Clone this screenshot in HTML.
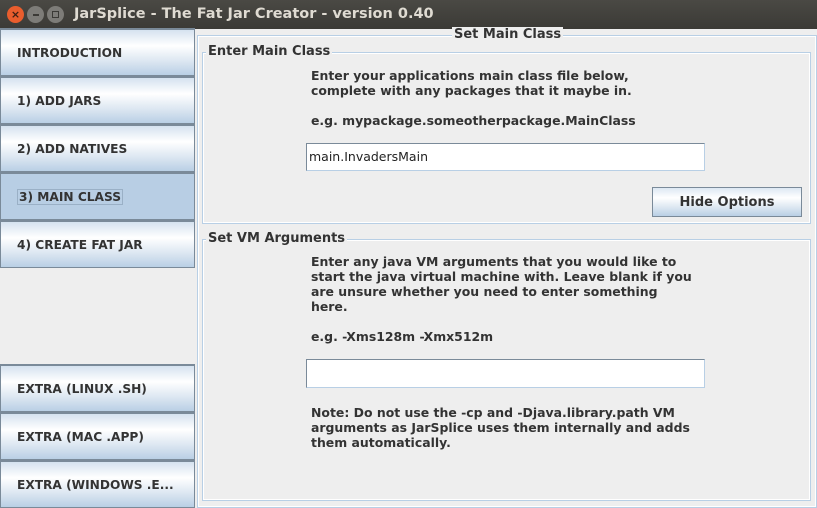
<!DOCTYPE html>
<html><head><style>
*{margin:0;padding:0;box-sizing:border-box}
body{width:817px;height:508px;background:#eeeeee;position:relative;overflow:hidden;font-family:"DejaVu Sans","Liberation Sans",sans-serif;font-weight:bold;font-size:12.5px;color:#333}
.a{position:absolute}
.tb{left:0;top:0;width:817px;height:29px;background:linear-gradient(#4a4944,#3b3a36);color:#dfdbd2;font-size:14.5px;line-height:29px}
.c{width:17px;height:17px;border-radius:50%;top:6px}
.btn{left:0;width:195px;height:48px;border:1px solid #7a8a99;border-top:2px solid #7a8a99;background:linear-gradient(#d5e2ef 0%,#fff 35%,#dbe6f1 70%,#b9cfe5 100%);padding-left:16px;line-height:46px;font-size:12.2px;color:#333}
.sel{background:#b8cee4}
.grp{border:1px solid #b8cfe5;box-shadow:inset 0 0 0 1px #fff}
.lg{background:#eeeeee;padding:0 2px;font-size:13px}
.t{left:311px;line-height:15px;white-space:pre;font-size:12.45px}
.tf{background:#fff;border:1px solid #7a8a99;border-right-color:#b8cfe5;border-bottom-color:#b8cfe5;font-weight:normal;font-size:12.5px;line-height:26px;padding-left:2px;color:#222}
</style></head><body>
<div class="a tb"><span class="a" style="left:74px">JarSplice - The Fat Jar Creator - version 0.40</span></div>
<div class="a c" style="left:7px;background:#e95d2d;color:#3b1f14;font-size:11px;line-height:17px;text-align:center">×</div>
<div class="a c" style="left:27px;background:#7d7c78"></div>
<div class="a c" style="left:47px;background:#7d7c78"></div>
<div class="a" style="left:33px;top:14px;width:6px;height:2px;background:#3b3a36"></div>
<div class="a" style="left:52px;top:11px;width:7px;height:7px;border:1px solid #3b3a36"></div>

<div class="a btn" style="top:28px">INTRODUCTION</div>
<div class="a btn" style="top:76px">1) ADD JARS</div>
<div class="a btn" style="top:124px">2) ADD NATIVES</div>
<div class="a btn sel" style="top:172px"><span style="border:1px solid #9ab0c6;padding:0 1px">3) MAIN CLASS</span></div>
<div class="a btn" style="top:220px">4) CREATE FAT JAR</div>
<div class="a btn" style="top:364px">EXTRA (LINUX .SH)</div>
<div class="a btn" style="top:412px">EXTRA (MAC .APP)</div>
<div class="a btn" style="top:460px">EXTRA (WINDOWS .E...</div>

<div class="a grp" style="left:197px;top:35px;width:620px;height:473px"></div>
<div class="a lg" style="left:452px;top:27px;line-height:16px">Set Main Class</div>

<div class="a grp" style="left:202px;top:52px;width:609px;height:172px"></div>
<div class="a lg" style="left:206px;top:44px;line-height:16px">Enter Main Class</div>
<div class="a t" style="top:68px">Enter your applications main class file below,
complete with any packages that it maybe in.

e.g. mypackage.someotherpackage.MainClass</div>
<div class="a tf" style="left:306px;top:143px;width:399px;height:28px">main.InvadersMain</div>
<div class="a" style="left:652px;top:187px;width:150px;height:30px;border:1px solid #7a8a99;background:linear-gradient(#dde8f3,#fff 35%,#dbe6f1 70%,#b9cfe5);text-align:center;line-height:29px;font-size:13px">Hide Options</div>

<div class="a grp" style="left:202px;top:239px;width:609px;height:262px"></div>
<div class="a lg" style="left:206px;top:231px;line-height:16px">Set VM Arguments</div>
<div class="a t" style="top:254px">Enter any java VM arguments that you would like to
start the java virtual machine with. Leave blank if you
are unsure whether you need to enter something
here.

e.g. -Xms128m -Xmx512m</div>
<div class="a tf" style="left:306px;top:359px;width:399px;height:29px"></div>
<div class="a t" style="top:405px">Note: Do not use the -cp and -Djava.library.path VM
arguments as JarSplice uses them internally and adds
them automatically.</div>
</body></html>
